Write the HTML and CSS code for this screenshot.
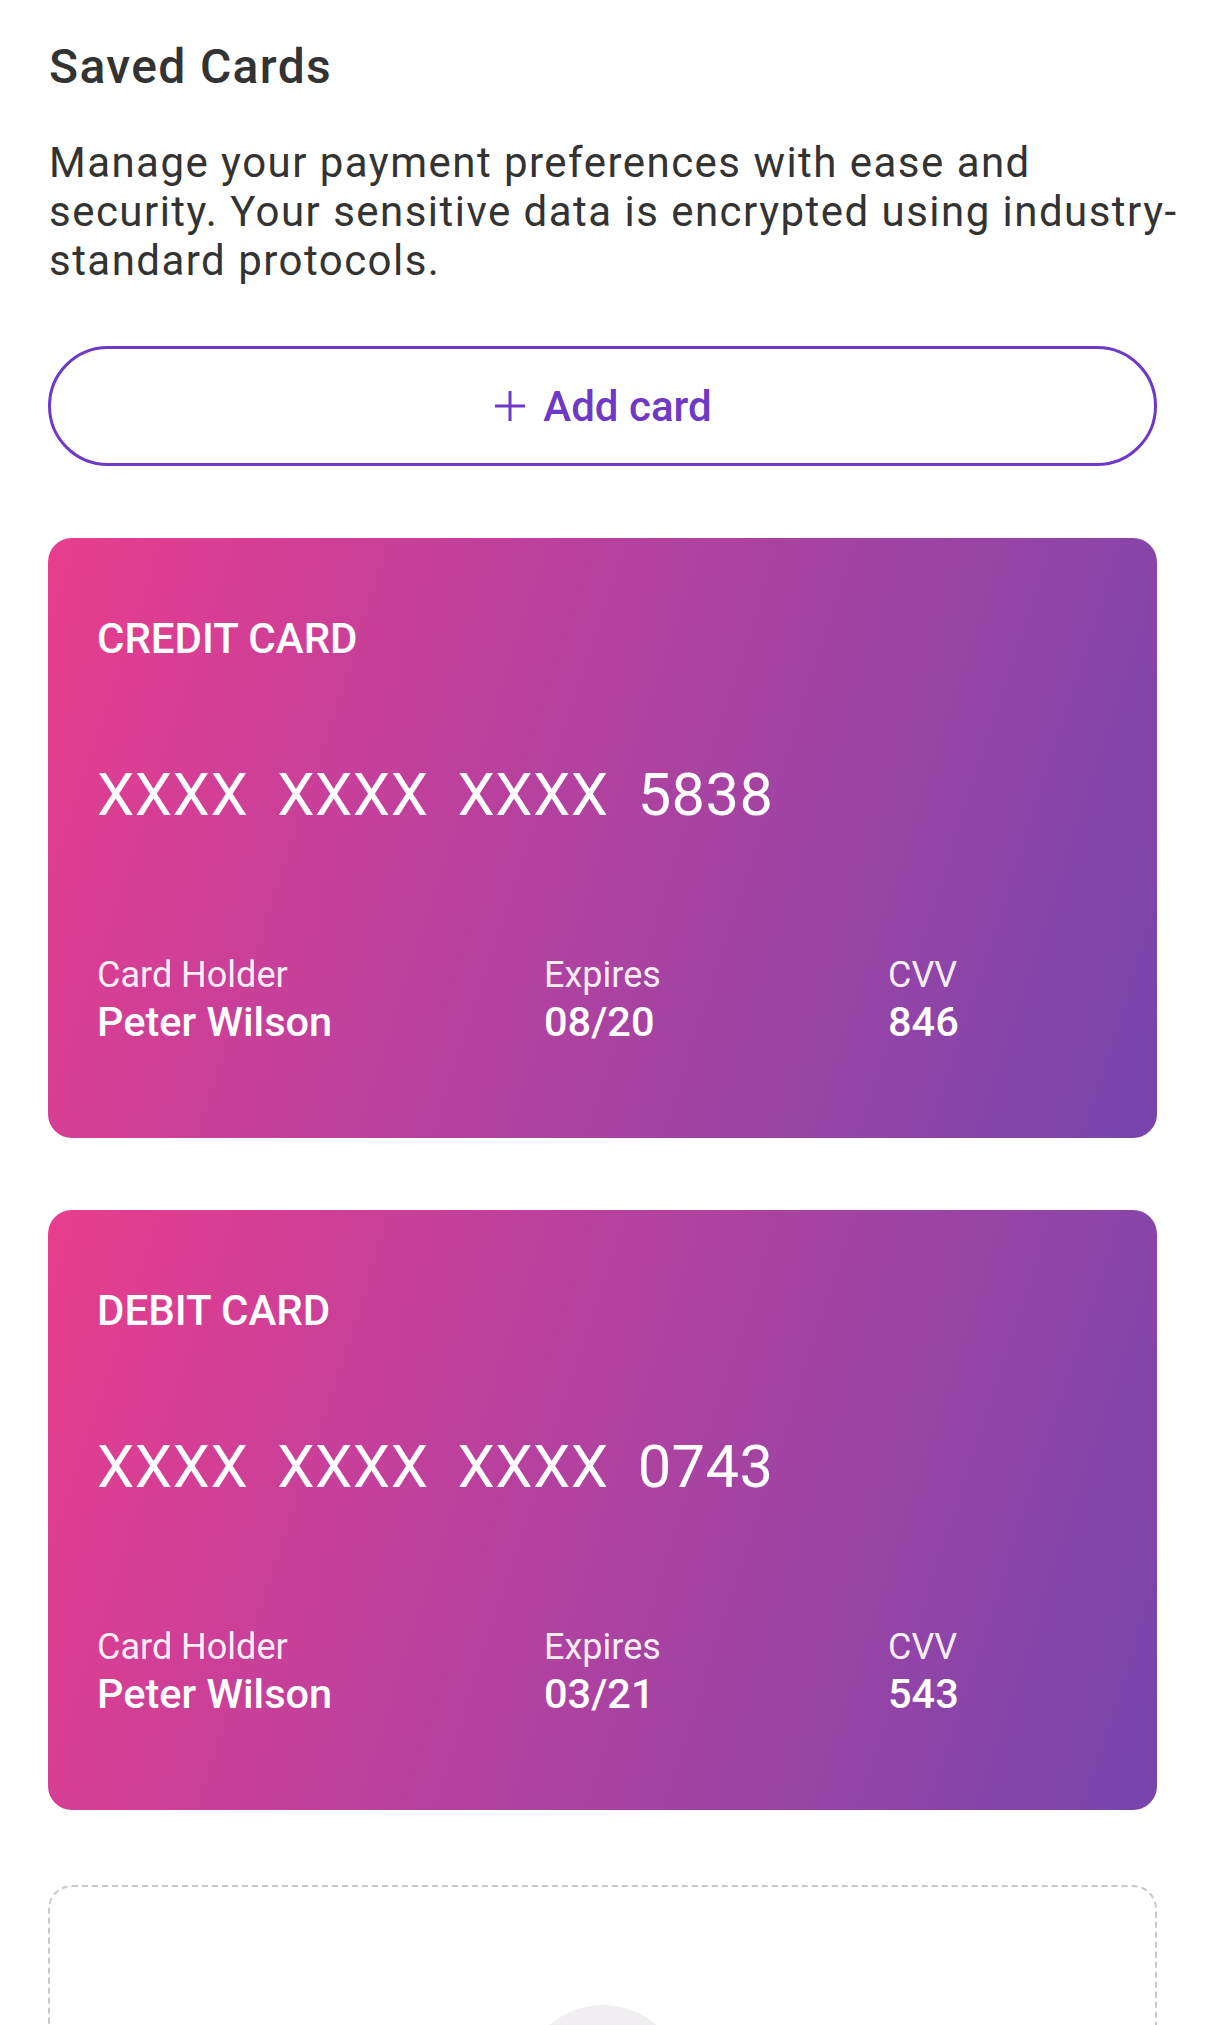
FILE: index.html
```html
<!DOCTYPE html>
<html lang="en">
<head>
<meta charset="utf-8">
<title>Saved Cards</title>
<link rel="stylesheet" href="styles.css">
</head>
<body>
<main class="page">
  <h1 class="title">Saved Cards</h1>
  <p class="intro">Manage your payment preferences with ease and security. Your sensitive data is encrypted using industry-standard protocols.</p>

  <button class="add-btn" type="button">
    <svg class="plus" viewBox="0 0 34 34" width="34" height="34" aria-hidden="true">
      <path d="M17 2 V32 M2 17 H32" stroke="currentColor" stroke-width="3" fill="none"/>
    </svg>
    <span>Add card</span>
  </button>

  <section class="card">
    <div class="card-type">CREDIT CARD</div>
    <div class="card-number"><span>XXXX</span><span>XXXX</span><span>XXXX</span><span>5838</span></div>
    <div class="card-meta">
      <div class="meta-col"><div class="meta-label">Card Holder</div><div class="meta-value">Peter Wilson</div></div>
      <div class="meta-col"><div class="meta-label">Expires</div><div class="meta-value">08/20</div></div>
      <div class="meta-col"><div class="meta-label">CVV</div><div class="meta-value">846</div></div>
    </div>
  </section>

  <section class="card">
    <div class="card-type">DEBIT CARD</div>
    <div class="card-number"><span>XXXX</span><span>XXXX</span><span>XXXX</span><span>0743</span></div>
    <div class="card-meta">
      <div class="meta-col"><div class="meta-label">Card Holder</div><div class="meta-value">Peter Wilson</div></div>
      <div class="meta-col"><div class="meta-label">Expires</div><div class="meta-value">03/21</div></div>
      <div class="meta-col"><div class="meta-label">CVV</div><div class="meta-value">543</div></div>
    </div>
  </section>

  <section class="placeholder">
    <div class="placeholder-circle"></div>
  </section>
</main>
</body>
</html>
```

FILE: styles.css
```css
html, body {
  margin: 0;
  padding: 0;
  background: #ffffff;
}

body {
  font-family: Roboto, "Noto Sans", "Liberation Sans", sans-serif;
  color: #333333;
  overflow: hidden;
}

.page {
  padding: 39px 49px 0 48px;
  display: flex;
  flex-direction: column;
}

.title {
  margin: 0;
  font-size: 48px;
  line-height: 56px;
  font-weight: 500;
  letter-spacing: 1.35px;
  color: #333333;
  padding-left: 1px;
}

.intro {
  margin: 43px -40px 0 1px;
  font-size: 42px;
  line-height: 49px;
  font-weight: 400;
  letter-spacing: 1.47px;
  color: #333333;
}

.add-btn {
  margin-top: 61px;
  height: 120px;
  box-sizing: border-box;
  border: 3px solid #6d39c6;
  border-radius: 60px;
  background: #ffffff;
  color: #6d39c6;
  display: flex;
  align-items: center;
  justify-content: center;
  gap: 16px;
  font-family: Roboto, "Noto Sans", "Liberation Sans", sans-serif;
  font-size: 42px;
  font-weight: 500;
  padding: 0;
}

.plus {
  display: block;
}

.card {
  margin-top: 72px;
  height: 600px;
  box-sizing: border-box;
  border-radius: 24px;
  background: linear-gradient(108deg, #e83d8d 0%, #c0409c 35%, #9a44a5 70%, #7645ad 100%);
  color: #ffffff;
  padding: 76px 48px 0 49px;
  display: flex;
  flex-direction: column;
}

.card + .card {
  margin-top: 72px;
}

.card-type {
  font-size: 42px;
  line-height: 50px;
  font-weight: 500;
}

.card-number {
  margin-top: 96px;
  font-size: 59.5px;
  line-height: 70px;
  font-weight: 400;
  letter-spacing: 0.5px;
  display: flex;
  gap: 29px;
}

.card-meta {
  margin-top: 123px;
  display: grid;
  grid-template-columns: 447px 344px 1fr;
}

.meta-label {
  font-size: 36px;
  line-height: 44px;
  font-weight: 400;
  color: rgba(255, 255, 255, 0.93);
}

.meta-value {
  font-size: 41.5px;
  line-height: 50px;
  font-weight: 500;
}

.placeholder {
  margin-top: 75px;
  height: 420px;
  box-sizing: border-box;
  border: 2px dashed #c9c9c9;
  border-radius: 24px;
  padding-top: 118px;
  display: flex;
  justify-content: center;
}

.placeholder-circle {
  width: 164px;
  height: 164px;
  border-radius: 50%;
  background: #f1eff2;
}
```
